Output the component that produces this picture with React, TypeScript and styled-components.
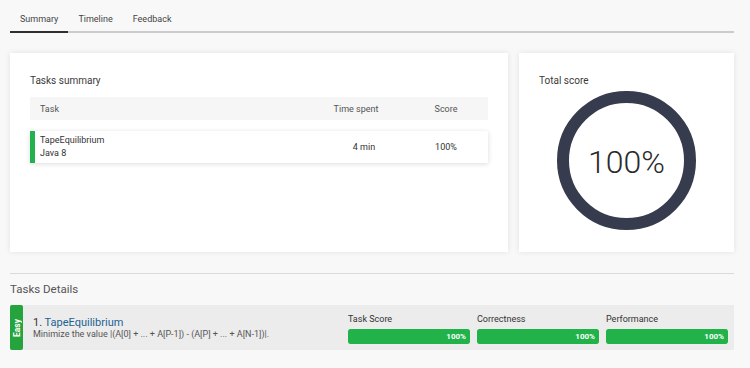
import React from "react";
import styled, { createGlobalStyle } from "styled-components";

const GlobalStyle = createGlobalStyle`
  html, body {
    margin: 0;
    padding: 0;
    background: #f8f8f8;
    font-family: Roboto, "Liberation Sans", Arial, sans-serif;
    color: #333;
  }
  * {
    box-sizing: border-box;
  }
`;

const Page = styled.div`
  width: 750px;
  height: 368px;
  padding: 0 16px 0 10px;
  overflow: hidden;
`;

const Tabs = styled.div`
  display: flex;
  border-bottom: 2px solid #cbcbcb;
`;

const Tab = styled.div<{ $active?: boolean }>`
  padding: 13px 10px 6px;
  font-size: 9px;
  line-height: 12px;
  color: #444;
  margin-bottom: -2px;
  border-bottom: 2px solid ${(p) => (p.$active ? "#2f2f2f" : "transparent")};
`;

const CardsRow = styled.div`
  display: flex;
  gap: 11px;
  margin-top: 20px;
`;

const Card = styled.div<{ $width: number }>`
  width: ${(p) => p.$width}px;
  height: 199px;
  background: #fff;
  box-shadow: 0 0 6px rgba(0, 0, 0, 0.09);
  padding: 22px 20px 0;
  display: flex;
  flex-direction: column;
`;

const CardTitle = styled.div`
  font-size: 10px;
  line-height: 12px;
  color: #3a3a3a;
`;

const Table = styled.div`
  margin-top: 10px;
  display: flex;
  flex-direction: column;
`;

const TableHeader = styled.div`
  display: grid;
  grid-template-columns: 1fr 100px 70px;
  align-items: center;
  height: 23px;
  padding: 0 7px 0 10px;
  background: #f6f6f6;
  font-size: 9px;
  color: #555;
`;

const Centered = styled.div<{ $shift?: number }>`
  text-align: center;
  transform: translateX(${(p) => p.$shift ?? 0}px);
`;

const TaskRow = styled.div`
  margin-top: 11px;
  display: grid;
  grid-template-columns: 1fr 100px 70px;
  align-items: center;
  height: 32px;
  padding: 0 7px 0 10px;
  background: #fff;
  border-left: 5px solid #22b14c;
  box-shadow: 0 1px 5px rgba(0, 0, 0, 0.14);
  font-size: 9px;
  color: #333;
`;

const TaskName = styled.div`
  display: flex;
  flex-direction: column;
  line-height: 13px;
  margin-left: -5px;
`;

const ScoreWrap = styled.div`
  margin-top: 4px;
  display: flex;
  justify-content: center;
`;

const Ring = styled.div`
  position: relative;
  width: 139px;
  height: 139px;
`;

const RingLabel = styled.div`
  position: absolute;
  inset: 0;
  display: flex;
  align-items: center;
  justify-content: center;
  font-size: 32px;
  font-weight: 300;
  color: #2a2a2a;
  padding-top: 2px;
`;

const Divider = styled.div`
  margin-top: 21px;
  border-top: 1px solid #dadada;
`;

const SectionTitle = styled.div`
  margin-top: 8px;
  font-size: 11.5px;
  line-height: 14px;
  color: #555;
`;

const DetailRow = styled.div`
  margin-top: 9px;
  height: 45px;
  display: flex;
  align-items: stretch;
  background: #ececec;
`;

const Difficulty = styled.div`
  width: 13px;
  background: #25a43e;
  border-radius: 2px;
  display: flex;
  align-items: center;
  justify-content: center;
`;

const DifficultyText = styled.span`
  writing-mode: vertical-rl;
  transform: rotate(180deg);
  color: #fff;
  font-size: 8.5px;
  font-weight: 700;
`;

const TaskInfo = styled.div`
  flex: 1;
  padding-left: 10px;
  display: flex;
  flex-direction: column;
  justify-content: center;
`;

const TaskTitle = styled.div`
  font-size: 11px;
  line-height: 13px;
  color: #333;
  a {
    color: #1d6290;
    text-decoration: none;
  }
`;

const TaskDesc = styled.div`
  font-size: 9px;
  line-height: 11px;
  color: #555;
`;

const Metrics = styled.div`
  display: flex;
  gap: 7px;
  padding: 9px 6px 6px 0;
`;

const Metric = styled.div`
  width: 122px;
  display: flex;
  flex-direction: column;
`;

const MetricLabel = styled.div`
  font-size: 9px;
  line-height: 11px;
  color: #333;
`;

const Bar = styled.div`
  margin-top: 4px;
  height: 15px;
  border-radius: 2px;
  background: #e0e0e0;
  overflow: hidden;
`;

const BarFill = styled.div`
  height: 100%;
  background: #22b24a;
  border-radius: 2px;
  display: flex;
  align-items: center;
  justify-content: flex-end;
  padding-right: 4px;
  color: #fff;
  font-size: 8px;
  font-weight: 700;
`;

const metrics = [
  { label: "Task Score", value: 100 },
  { label: "Correctness", value: 100 },
  { label: "Performance", value: 100 },
];

const App = () => {
  return (
    <Page>
      <GlobalStyle />
      <Tabs>
        <Tab $active>Summary</Tab>
        <Tab>Timeline</Tab>
        <Tab>Feedback</Tab>
      </Tabs>

      <CardsRow>
        <Card $width={498}>
          <CardTitle>Tasks summary</CardTitle>
          <Table>
            <TableHeader>
              <div>Task</div>
              <Centered $shift={-5}>Time spent</Centered>
              <Centered>Score</Centered>
            </TableHeader>
            <TaskRow>
              <TaskName>
                <span>TapeEquilibrium</span>
                <span>Java 8</span>
              </TaskName>
              <Centered $shift={3}>4 min</Centered>
              <Centered>100%</Centered>
            </TaskRow>
          </Table>
        </Card>
        <Card $width={215}>
          <CardTitle>Total score</CardTitle>
          <ScoreWrap>
            <Ring>
              <svg width="139" height="139" viewBox="0 0 139 139">
                <circle cx="69.5" cy="69.5" r="63.5" fill="none" stroke="#363b4d" strokeWidth="12" />
              </svg>
              <RingLabel>100%</RingLabel>
            </Ring>
          </ScoreWrap>
        </Card>
      </CardsRow>

      <Divider />
      <SectionTitle>Tasks Details</SectionTitle>
      <DetailRow>
        <Difficulty>
          <DifficultyText>Easy</DifficultyText>
        </Difficulty>
        <TaskInfo>
          <TaskTitle>
            1. <a href="#">TapeEquilibrium</a>
          </TaskTitle>
          <TaskDesc>Minimize the value |(A[0] + ... + A[P-1]) - (A[P] + ... + A[N-1])|.</TaskDesc>
        </TaskInfo>
        <Metrics>
          {metrics.map((m) => (
            <Metric key={m.label}>
              <MetricLabel>{m.label}</MetricLabel>
              <Bar>
                <BarFill style={{ width: `${m.value}%` }}>{m.value}%</BarFill>
              </Bar>
            </Metric>
          ))}
        </Metrics>
      </DetailRow>
    </Page>
  );
};

export default App;
